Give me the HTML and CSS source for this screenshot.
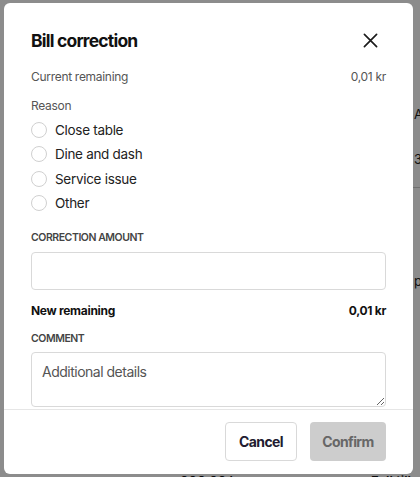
FILE: index.html
```html
<!DOCTYPE html>
<html lang="en">
<head>
  <meta charset="UTF-8" />
  <meta name="viewport" content="width=device-width, initial-scale=1.0"/>
  <title>Bill correction</title>
  <link rel="stylesheet" href="styles.css">
</head>
<body>
  <div class="page">
    <div class="side">
      <div class="side-row">A</div>
      <div class="side-row">35</div>
      <div class="side-line"></div>
      <div class="side-row side-low">p</div>
    </div>
    <div class="bottom-bar">
      <span>000,00 kr</span>
      <span>&lt;</span>
      <span>Full till</span>
    </div>
  </div>

  <div class="overlay">
    <div class="modal">
      <div class="modal-body">
        <div class="modal-head">
          <h2>Bill correction</h2>
          <button class="close" aria-label="Close">
            <svg width="16" height="16" viewBox="0 0 16 16">
              <path d="M1.5 1.5 L14.5 14.5 M14.5 1.5 L1.5 14.5" stroke="#1c1c1c" stroke-width="1.8" stroke-linecap="round"/>
            </svg>
          </button>
        </div>

        <div class="row muted">
          <span>Current remaining</span>
          <span>0,01 kr</span>
        </div>

        <div class="reason">
          <div class="muted">Reason</div>
          <label class="radio"><input type="radio" name="reason"><span>Close table</span></label>
          <label class="radio"><input type="radio" name="reason"><span>Dine and dash</span></label>
          <label class="radio"><input type="radio" name="reason"><span>Service issue</span></label>
          <label class="radio"><input type="radio" name="reason"><span>Other</span></label>
        </div>

        <div class="field-label">Correction amount</div>
        <input class="amount" type="text">

        <div class="row strong">
          <span>New remaining</span>
          <span>0,01 kr</span>
        </div>

        <div class="field-label comment-label">Comment</div>
        <textarea class="comment" placeholder="Additional details"></textarea>
      </div>

      <div class="modal-foot">
        <button class="btn btn-cancel">Cancel</button>
        <button class="btn btn-confirm" disabled>Confirm</button>
      </div>
    </div>
  </div>
</body>
</html>
```

FILE: styles.css
```css
* {
  box-sizing: border-box;
}

body {
  margin: 0;
  font-family: Inter, "Noto Sans", Arial, sans-serif;
  background: #fff;
  color: #1c1c1c;
}

.page {
  height: 477px;
  position: relative;
  overflow: hidden;
}

.side {
  position: absolute;
  left: 400px;
  top: 0;
  width: 40px;
  height: 100%;
  font-size: 13px;
  color: #222;
}

.side-row {
  padding-left: 14px;
  height: 18px;
}

.side-row:first-child {
  margin-top: 106px;
}

.side-row + .side-row {
  margin-top: 27px;
}

.side-line {
  margin-top: 18px;
  border-top: 1px solid #ccc;
}

.side .side-low {
  margin-top: 85px;
}

.bottom-bar {
  position: absolute;
  left: 0;
  right: 0;
  top: 473px;
  display: flex;
  gap: 60px;
  padding-left: 180px;
  font-size: 13px;
  font-weight: 600;
  color: #111;
}

.overlay {
  position: fixed;
  inset: 0;
  background: rgba(0, 0, 0, 0.45);
  padding: 3px 7px 3px 4px;
}

.modal {
  background: #fff;
  border-radius: 6px;
  height: 471px;
  display: flex;
  flex-direction: column;
  overflow: hidden;
}

.modal-body {
  flex: 1;
  overflow: hidden;
  padding: 25px 27px 0 27px;
}

.modal-head {
  display: flex;
  justify-content: space-between;
  align-items: center;
  height: 24px;
}

h2 {
  margin: 0;
  font-size: 17.5px;
  font-weight: 700;
  color: #111;
  letter-spacing: -0.8px;
}

.close {
  background: none;
  border: none;
  padding: 0;
  margin-right: 8px;
  width: 15px;
  height: 15px;
  cursor: pointer;
}

.close svg {
  width: 15px;
  height: 15px;
}

.row {
  display: flex;
  justify-content: space-between;
  font-size: 12px;
  line-height: 18px;
  letter-spacing: -0.3px;
}

.muted {
  color: #555;
  font-size: 12px;
  line-height: 18px;
  letter-spacing: -0.3px;
}

.modal-head + .row {
  margin-top: 16px;
}

.reason {
  margin-top: 11px;
}

.radio {
  display: flex;
  align-items: center;
  gap: 8px;
  height: 24.3px;
  font-size: 13.5px;
  letter-spacing: -0.3px;
  color: #222;
}

.reason .radio:first-of-type {
  margin-top: 3px;
}

.radio input {
  appearance: none;
  margin: 0;
  width: 16px;
  height: 16px;
  border: 1px solid #d0d0d0;
  border-radius: 50%;
  background: #fff;
}

.field-label {
  margin-top: 16px;
  font-size: 10.5px;
  line-height: 14px;
  font-weight: 600;
  text-transform: uppercase;
  color: #444;
  letter-spacing: -0.45px;
}

.amount {
  display: block;
  width: 100%;
  height: 38px;
  margin-top: 7px;
  border: 1px solid #d9d9d9;
  border-radius: 4px;
  font-size: 14px;
  padding: 0 10px;
}

.strong {
  margin-top: 12px;
  font-weight: 700;
  color: #111;
}

.comment-label {
  margin-top: 12px;
}

.comment {
  display: block;
  width: 100%;
  height: 55px;
  margin-top: 6px;
  border: 1px solid #d9d9d9;
  border-radius: 4px;
  padding: 10px 10px;
  font-family: inherit;
  font-size: 14px;
  letter-spacing: -0.5px;
  resize: vertical;
}

.comment::placeholder {
  color: #555;
}

.modal-foot {
  border-top: 1px solid #e6e6e6;
  display: flex;
  justify-content: flex-end;
  gap: 13px;
  padding: 12px 27px 13px;
}

.btn {
  height: 39px;
  border-radius: 4px;
  font-family: inherit;
  font-size: 14px;
  font-weight: 700;
  letter-spacing: -0.6px;
  padding: 0 10px;
}

.btn-cancel {
  width: 72px;
  background: #fff;
  border: 1px solid #d9d9d9;
  color: #221b30;
  cursor: pointer;
}

.btn-confirm {
  width: 76px;
  background: #cdcdcd;
  border: none;
  color: #676767;
}
```
